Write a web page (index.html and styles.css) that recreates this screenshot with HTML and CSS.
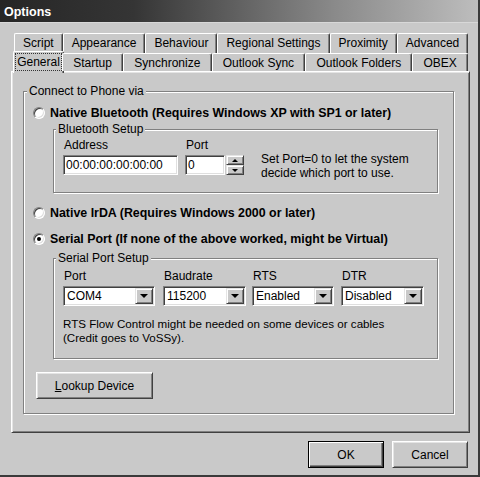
FILE: index.html
```html
<!DOCTYPE html>
<html>
<head>
<meta charset="utf-8">
<title>Options</title>
<link rel="stylesheet" href="styles.css">
</head>
<body>
<div class="window">
  <div class="titlebar">Options</div>
  <div class="client">
    <div class="tabs">
      <div class="tabrow back">
        <div class="tab">Script</div>
        <div class="tab">Appearance</div>
        <div class="tab">Behaviour</div>
        <div class="tab">Regional Settings</div>
        <div class="tab">Proximity</div>
        <div class="tab">Advanced</div>
      </div>
      <div class="tabrow front">
        <div class="tab selected"><span class="focus">General</span></div>
        <div class="tab">Startup</div>
        <div class="tab">Synchronize</div>
        <div class="tab">Outlook Sync</div>
        <div class="tab">Outlook Folders</div>
        <div class="tab">OBEX</div>
      </div>
    </div>
    <div class="panel">
      <fieldset class="group main">
        <legend>Connect to Phone via</legend>
        <div class="option"><span class="radio"></span>Native Bluetooth (Requires Windows XP with SP1 or later)</div>
        <fieldset class="group sub bt">
          <legend>Bluetooth Setup</legend>
          <div class="bt-row">
            <div class="field addr">
              <div class="label">Address</div>
              <div class="edit">00:00:00:00:00:00</div>
            </div>
            <div class="field port">
              <div class="label">Port</div>
              <div class="spin-wrap">
                <div class="edit">0</div>
                <div class="spinner">
                  <div class="spin-btn"><span class="tri-up"></span></div>
                  <div class="spin-btn"><span class="tri-down-s"></span></div>
                </div>
              </div>
            </div>
            <div class="hint">Set Port=0 to let the system<br>decide which port to use.</div>
          </div>
        </fieldset>
        <div class="option irda"><span class="radio"></span>Native IrDA (Requires Windows 2000 or later)</div>
        <div class="option serial"><span class="radio checked"></span>Serial Port (If none of the above worked, might be Virtual)</div>
        <fieldset class="group sub sp">
          <legend>Serial Port Setup</legend>
          <div class="sp-row">
            <div class="field c1">
              <div class="label">Port</div>
              <div class="combo"><span class="value">COM4</span><span class="drop"><span class="tri-down"></span></span></div>
            </div>
            <div class="field c2">
              <div class="label">Baudrate</div>
              <div class="combo"><span class="value">115200</span><span class="drop"><span class="tri-down"></span></span></div>
            </div>
            <div class="field c3">
              <div class="label">RTS</div>
              <div class="combo"><span class="value">Enabled</span><span class="drop"><span class="tri-down"></span></span></div>
            </div>
            <div class="field c4">
              <div class="label">DTR</div>
              <div class="combo"><span class="value">Disabled</span><span class="drop"><span class="tri-down"></span></span></div>
            </div>
          </div>
          <div class="note">RTS Flow Control might be needed on some devices or cables<br>(Credit goes to VoSSy).</div>
        </fieldset>
        <div class="btn lookup"><span><u>L</u>ookup Device</span></div>
      </fieldset>
    </div>
    <div class="buttons">
      <div class="btn default">OK</div>
      <div class="btn">Cancel</div>
    </div>
  </div>
</div>
</body>
</html>
```

FILE: styles.css
```css
* { box-sizing: border-box; }
html, body { margin: 0; padding: 0; background: #c9c9c9; }
body {
  font-family: "Liberation Sans", Arial, sans-serif;
  font-size: 12px;
  line-height: 14px;
  color: #000;
}
.window {
  width: 480px;
  height: 477px;
  background: #c9c9c9;
  border-right: 2px solid #3a3a3a;
  border-bottom: 2px solid #3a3a3a;
  display: flex;
  flex-direction: column;
  overflow: hidden;
}
.titlebar {
  height: 23px;
  flex: none;
  padding: 3px 0 0 4px;
  line-height: 18px;
  font-size: 12.5px;
  font-weight: bold;
  color: #fff;
  background: linear-gradient(to right, #262626 0%, #353535 28%, #8a8a8a 70%, #bdbdbd 100%);
  border-bottom: 1px solid #d8d8d8;
}
.client {
  padding: 10px 8px 0 11px;
  display: flex;
  flex-direction: column;
}

/* tabs */
.tabs { margin: 0 2px 0 3px; }
.tabrow { display: flex; }
.tabrow.back { height: 20px; }
.tabrow.front { height: 18px; position: relative; z-index: 1; align-items: flex-start; }
.tab {
  flex: 1 1 auto;
  padding: 0 8px;
  display: flex;
  align-items: center;
  justify-content: center;
  white-space: nowrap;
  background: #c9c9c9;
  border-top: 1px solid #fff;
  border-left: 1px solid #fff;
  border-right: 1px solid #404040;
  box-shadow: inset -1px 0 0 #808080;
  border-radius: 2px 2px 0 0;
}
.back .tab { height: 20px; padding-bottom: 1px; }
.front .tab { height: 18px; padding: 0 9px; }
.front .tab.selected {
  height: 22px;
  margin: -2px -2px 0 -1px;
  padding: 1px 1px 2px 1px;
}
.focus {
  flex: 1;
  align-self: stretch;
  display: flex;
  align-items: center;
  justify-content: center;
  border: 1px dotted #333;
}

/* panel */
.panel {
  height: 362px;
  flex: none;
  border: 1px solid;
  border-color: #fff #404040 #404040 #fff;
  box-shadow: inset 1px 1px 0 #e4e4e4, inset -1px -1px 0 #808080;
  padding: 12px 15px 0 11px;
}
fieldset.group {
  margin: 0;
  min-width: 0;
  border: 1px solid #808080;
  box-shadow: 1px 1px 0 #fff, inset 1px 1px 0 #fff;
}
legend {
  padding: 0 2px;
  line-height: 14px;
  background: #c9c9c9;
}
.main > legend { margin-left: -6px; }
.sub > legend { margin-left: -7px; }
fieldset.main { padding: 7px 15px 14px 9px; }
.option {
  display: flex;
  align-items: center;
  height: 16px;
  font-weight: bold;
  font-size: 12.4px;
  white-space: nowrap;
}
.option.irda { margin-top: 12px; }
.option.serial { margin-top: 10px; }
.radio {
  width: 12px;
  height: 12px;
  margin-right: 5px;
  flex: none;
  border-radius: 50%;
  background: #fff;
  border: 1px solid;
  border-color: #808080 #fff #fff #808080;
  box-shadow: inset 1px 1px 0 #404040, inset -1px -1px 0 #dfdfdf;
  display: flex;
  align-items: center;
  justify-content: center;
}
.radio.checked::after {
  content: "";
  width: 4px;
  height: 4px;
  border-radius: 50%;
  background: #000;
}
fieldset.sub { margin-left: 20px; }
fieldset.bt { margin-top: 1px; padding: 2px 10px 17px 9px; }
fieldset.sp { margin-top: 4px; padding: 4px 10px 13px 9px; }

.label { padding-left: 1px; height: 14px; margin-bottom: 3px; }
.edit {
  height: 20px;
  background: #fff;
  border: 1px solid;
  border-color: #808080 #fff #fff #808080;
  box-shadow: inset 1px 1px 0 #404040, inset -1px -1px 0 #dfdfdf;
  padding: 0 2px;
  line-height: 18px;
  white-space: nowrap;
}
.bt-row { display: flex; align-items: flex-end; }
.addr { width: 115px; }
.port { margin-left: 7px; }
.spin-wrap { display: flex; gap: 1px; }
.port .edit { width: 40px; }
.spinner { width: 18px; height: 20px; display: flex; flex-direction: column; }
.spin-btn {
  height: 10px;
  display: flex;
  align-items: center;
  justify-content: center;
  background: #c9c9c9;
  border: 1px solid;
  border-color: #e4e4e4 #404040 #404040 #e4e4e4;
  box-shadow: inset 1px 1px 0 #fff, inset -1px -1px 0 #808080;
}
.tri-up {
  width: 0; height: 0;
  border-left: 3px solid transparent;
  border-right: 3px solid transparent;
  border-bottom: 3px solid #000;
}
.tri-down-s {
  width: 0; height: 0;
  border-left: 3px solid transparent;
  border-right: 3px solid transparent;
  border-top: 3px solid #000;
}
.hint { margin-left: 17px; margin-bottom: -5px; white-space: nowrap; }

.sp-row { display: flex; }
.c1 { width: 92px; }
.c2 { width: 83px; margin-left: 8px; }
.c3 { width: 82px; margin-left: 6px; }
.c4 { width: 83px; margin-left: 7px; }
.combo {
  height: 20px;
  display: flex;
  background: #fff;
  border: 1px solid;
  border-color: #808080 #fff #fff #808080;
  box-shadow: inset 1px 1px 0 #404040, inset -1px -1px 0 #dfdfdf;
  padding: 1px;
}
.combo .value { flex: 1; padding-left: 2px; line-height: 16px; }
.combo .drop {
  width: 18px;
  height: 16px;
  flex: none;
  display: flex;
  align-items: center;
  justify-content: center;
  background: #c9c9c9;
  border: 1px solid;
  border-color: #e4e4e4 #404040 #404040 #e4e4e4;
  box-shadow: inset 1px 1px 0 #fff, inset -1px -1px 0 #808080;
}
.tri-down {
  width: 0; height: 0;
  border-left: 4px solid transparent;
  border-right: 4px solid transparent;
  border-top: 4px solid #000;
}
.note { margin-top: 11px; white-space: nowrap; font-size: 11.6px; }

.btn {
  display: flex;
  align-items: center;
  justify-content: center;
  background: #c9c9c9;
  border: 1px solid;
  border-color: #fff #404040 #404040 #fff;
  box-shadow: inset 1px 1px 0 #e4e4e4, inset -1px -1px 0 #808080;
  height: 27px;
  white-space: nowrap;
}
.lookup { width: 117px; margin: 13px 0 0 3px; }
.buttons {
  display: flex;
  justify-content: flex-end;
  gap: 8px;
  margin: 8px 2px 0 0;
}
.buttons .btn { width: 76px; }
.btn.default {
  border-color: #000;
  box-shadow: inset 1px 1px 0 #fff, inset -1px -1px 0 #404040, inset -2px -2px 0 #808080;
}
```
